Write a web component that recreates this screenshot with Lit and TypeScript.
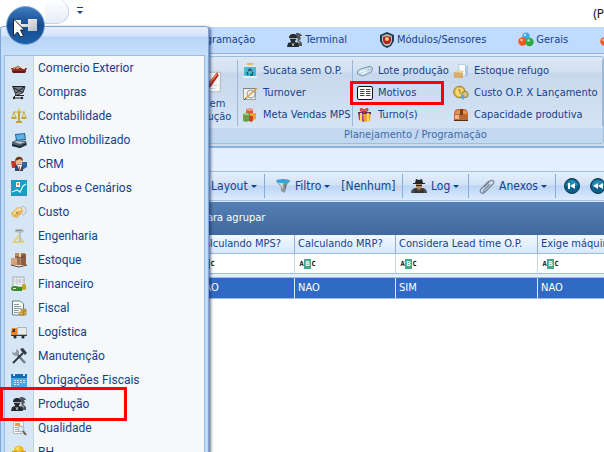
import { LitElement, html, svg, css, nothing } from "lit";
import { customElement } from "lit/decorators.js";
import { classMap } from "lit/directives/class-map.js";

const people = svg`
  <path fill="#50565d" d="M9 1h2l3 1v1h1v1h-2l1 3-2 1 3 3v3h-4l-1-5z"/>
  <path fill="#262a2f" d="M2 6V5l1-2 2-1h3l2 2v2H9v2L8 9v1l3 1 1 4H0l1-4 3-1V9L3 8V6z"/>
  <path stroke="#c3ccd6" stroke-width=".8" d="M2 6.500h8M5 11l1 3 1-3M10 6l1 4 2 1"/>`;

const balls = svg`
  <circle cx="8" cy="4" r="3.6" fill="#39a8e6"/><circle cx="4.5" cy="9.5" r="4.2" fill="#f0571f"/>
  <circle cx="11.5" cy="10" r="4.2" fill="#2fa746"/>
  <circle cx="7" cy="3" r="1.2" fill="#b6e5ff"/><circle cx="3.5" cy="8" r="1.3" fill="#ffc6a6"/>
  <circle cx="10.5" cy="8.5" r="1.3" fill="#b2edb0"/>`;

const icons: Record<string, unknown> = {
  people,
  balls,
  ship: svg`
    <path fill="#8d2f25" d="M0 8h16l-2 5H2z"/><path fill="#5d1a18" d="M1 11h14l-1 2H2z"/>
    <path fill="#c98e63" d="M2 7h2v2H2zM5 7h3v2H5z"/><path fill="#e7e2da" d="M11 5h3v4h-3z"/>
    <path stroke="#9a6c52" d="M4 8l3-2 3 2"/>`,
  cart: svg`
    <path fill="#777c82" d="m2 3 12-1-2 7-7 1z"/>
    <path fill="none" stroke="#222" d="M1 2.500h13l-2 6-7 3h8M2 3l3 8-3 3h10M3 4l8 4M5 9l8-6"/>
    <circle cx="3" cy="14" r="1.200" fill="#222"/><circle cx="11" cy="14" r="1.200" fill="#222"/>`,
  scales: svg`
    <path fill="none" stroke="#c5a532" stroke-width=".8" d="M2 4h12M3 4l-2 6M3 4l2 6M13 4l-2 6M13 4l2 6"/>
    <path fill="#c5a532" d="M7 1h2v12H7zM0 9h6l-1 2H1zM10 9h6l-1 2h-4zM5 13h6v2H5z"/>
    <circle cx="8" cy="2" r="1.5" fill="#e4cb5a"/>`,
  laptop: svg`
    <path fill="#245d8e" d="m4 2 10-1 1 7-10 1z"/><path fill="#56b4e4" d="m5 3 8-1 1 5-8 1z"/>
    <path fill="#51606d" d="m1 10 4-2 10 1 1 4-7 3-8-2z"/><path fill="#b8c5cf" d="m3 10 3-1 8 1-5 2z"/>
    <path fill="#1f2c38" d="m1 12 8 2 6-3v2l-6 3-8-2z"/>`,
  crm: svg`
    <path fill="#c63928" d="M0 5h5v7H1z"/><path fill="#2f63a8" d="M11 6h5v5l-5 3z"/>
    <path fill="#39455e" d="M4 15V9l4-1 4 1v6z"/><path fill="#fff" d="M6 9h5l-2 6z"/>
    <circle cx="8" cy="5" r="3.4" fill="#f0b78c"/><path fill="#6c321b" d="M4 5c0-5 8-6 8 0L9 3z"/>
    <path stroke="#d9422f" d="m8 10 1 4"/>`,
  chart: svg`
    <path fill="#159fc2" d="M0 0h16v16H0z"/><path fill="none" stroke="#e8fbff" stroke-width="1.2" d="m1 12 5-2 3 2 3-6 3-2"/>
    <path fill="#fff" d="M5 2h4v5H5z"/><path fill="#e77b36" d="M6 3h2v2H6z"/>`,
  tag: svg`
    <path fill="none" stroke="#bab9a8" d="M9 6c1-6 7-4 6 2-1 3-3 4-4 2"/>
    <path fill="#e6b65f" d="m0 9 7-6 4 1 1 4-6 6-4-1z"/><path fill="#f6da9a" d="m2 9 5-5 2 1-6 6z"/>
    <circle cx="9" cy="5.500" r="1" fill="#fff"/><path stroke="#a56b25" d="m5 8 2 2"/>`,
  engineer: svg`
    <path fill="#e0d276" fill-rule="evenodd" d="m1 15 6-8 6 6 1 2zM5 13h5L7 10z"/>
    <path fill="#b8c0c5" d="M4 1h8l1 3-3 1v9H8V5L4 4z"/><path fill="#8c959b" d="M5 2h6v1H5z"/>`,
  boxes: svg`
    <path fill="#b98962" d="M4 1h10v12H4z"/><path fill="#8c5f43" d="M10 2h5v11h-5z"/>
    <path fill="#d2a57c" d="M0 6h7v7H0z"/><path fill="#9f7151" d="M6 6h3v7H6z"/>
    <path stroke="#6a432e" d="M4 5h10M0 13l8 2 8-2"/><path fill="#ead0ac" d="M8 1h2v4H8z"/>`,
  finance: svg`
    <path fill="#f3f5f7" stroke="#a0a9b0" d="M2 1h11v10H2z"/><path stroke="#bdc5cc" d="M3 4h9M3 6h9M6 2v7M9 2v7"/>
    <ellipse cx="4" cy="12.500" rx="4" ry="2.500" fill="#398b2c"/><path fill="#e6f4dc" d="M2 12h3v1H2z"/>
    <path fill="#398b2c" d="M6 11h5v4H5z"/><path fill="#d7b63b" d="M11 8h4v6h-4z"/><path stroke="#927721" stroke-width=".6" d="M11 10h4M11 12h4"/>`,
  fiscal: svg`
    <path fill="#fbfdfd" stroke="#617f84" d="M1.500 1h8l3 3v11h-11z"/>
    <path stroke="#87999b" d="M3 4.500h5M3 6.500h7M3 8.500h7M3 10.500h5M3 12.500h4"/>
    <path fill="#e9b94d" stroke="#8c692b" stroke-width=".6" d="M10 9h5v2h-5zM8 12h5v3H8zM12 11h3v4h-3z"/>`,
  truck: svg`
    <path fill="#aeb5bb" d="M6 3h10v8H6z"/><path fill="#e7eaed" d="M7 4h8v6H7z"/>
    <path fill="#ec8426" d="M1 4h5v8H0V8z"/><path fill="#313a42" d="M2 5h2v3H1zM0 11h16v1H0z"/>
    <circle cx="4" cy="13" r="1.600" fill="#252b30"/><circle cx="12" cy="13" r="1.600" fill="#252b30"/>`,
  tools: svg`
    <path stroke="#707a82" stroke-width="2.400" d="m5 5 9 10"/><path stroke="#33383d" stroke-width="2" d="M12 5 2 15"/>
    <path fill="#929ca4" d="M1 3l2 2 2-1V1l3 2v3L5 8 2 7z"/><path fill="#343b42" d="m9 1 3-1 4 5-2 2-3-3z"/>`,
  calendar: svg`
    <path fill="#48a8e7" d="M0 3h16v12H0z"/><path fill="#126cb8" d="M0 2h16v4H0z"/>
    <path fill="#cdeaff" d="M2 0h2v4H2zM12 0h2v4h-2zM3 8h2v1H3zM6 8h2v1H6zM9 8h2v1H9zM12 8h2v1h-2zM3 10h2v1H3zM6 10h2v1H6zM9 10h2v1H9zM12 10h2v1h-2zM3 12h2v1H3zM6 12h2v1H6z"/>`,
  quality: svg`
    <path fill="#fafafa" stroke="#b7bbc0" d="M2.500 1.500h10v12h-10z"/><path fill="#e89348" d="M4 3h5v3H4z"/>
    <path stroke="#a3abb3" d="M4 7.500h7M4 9.500h6M4 11.500h4"/><circle cx="10" cy="9" r="3" fill="#d7e8f2" stroke="#a9b3bb"/>
    <path stroke="#655e5b" stroke-width="2" d="m12 11 3 4"/>`,
  hr: svg`
    <path fill="#f4bc18" d="M3 7c0-7 10-7 10 0z"/><path fill="#ffe36b" d="M6 3h2v3H5z"/>
    <path fill="#d7930c" d="M1 7h14v2H1z"/><circle cx="8" cy="11" r="4" fill="#efbb8a"/>`,
  trash: svg`
    <path fill="#dfb956" d="M5 0h6v3H5z"/><path fill="#dbe6ec" d="M1 2h14v3H1z"/><path fill="#45bdd4" d="M2 4h12v10H2z"/>
    <path fill="#e5eff3" d="M1 13h14v2H1z"/>
    <path fill="none" stroke="#185668" stroke-width="1.500" d="m6 8 2-2 2 2M11 9l-1 3H8M5 9l1 3"/>`,
  turnover: svg`
    <path fill="#f3f0e8" stroke="#9ba2a6" d="M1.500 3.500h12v11h-12z"/><path fill="#78848b" d="M1 3h13v1H1z"/>
    <circle cx="9" cy="9" r="4" fill="#eef5f9" stroke="#969ea4"/><path stroke="#df9b31" stroke-width="1.500" d="m3 14 12-11"/>
    <path stroke="#465158" d="m2 15 2-2"/>`,
  sales: svg`
    <path fill="#d9583d" d="M4 2h7v7H4z"/><ellipse cx="7.500" cy="2.500" rx="3.500" ry="1.500" fill="#f09a80"/>
    <path fill="#6c9e44" d="M1 7h6v7l-3 1-3-1z"/><path fill="#e4a733" d="M8 6h6v6l-3 1-3-1z"/>
    <ellipse cx="4" cy="7" rx="3" ry="1.300" fill="#a5cb80"/><path fill="#c7432e" d="M7 9h4v5l-2 1-2-1z"/>`,
  label: svg`
    <path fill="#c9dff0" stroke="#7895b0" d="m.5 8 3-2 10-3 2 2-1 4-9 4-5-2z"/><circle cx="12.500" cy="5.500" r="1.200" fill="#fff" stroke="#7895b0" stroke-width=".6"/>
    <path stroke="#fff" d="m3 9 6-2M5 11l5-2"/>`,
  list: svg`
    <rect x=".5" y="1.500" width="15" height="13" rx="1.500" fill="#fff" stroke="#111"/>
    <path stroke="#444" d="M3 4.500h4.500M3 6.500h4.500M3 8.500h4.500M3 10.500h4.500M9 4.500h4.500M9 6.500h4.500M9 8.500h4.500M9 10.500h4.500"/>`,
  gift: svg`
    <path fill="#b33d79" d="M1 6h6v9L2 13z"/><path fill="#eaa62d" d="M6 6h8l-1 8-6 1z"/>
    <path fill="#67315d" d="M1 5h13v2H1z"/><path fill="#ffda59" d="M3 6h2v8H3zM10 6h2v8h-2z"/>
    <path fill="none" stroke="#be3c2b" stroke-width="1.500" d="M7 5C1 4 4-1 7 4c4-5 6 0 0 1"/>`,
  folder: svg`
    <path fill="#f7fbff" stroke="#b7cde0" d="M5.500 1.500h6l3 2v9l-8 1z"/><path fill="#a8c8df" d="M12 3h3v9l-3 2z"/>
    <path fill="#d5ad6f" d="M1 9h9v6H1z"/><path fill="#eed4a6" d="m1 9 3-2 7 1-1 2z"/><path fill="#fff" d="M7 2h3v4H7z"/>`,
  coins: svg`
    <circle cx="6.500" cy="7" r="5.800" fill="#e0b43a" stroke="#a77e18"/><circle cx="6.500" cy="7" r="4" fill="#f5dc7b"/>
    <path stroke="#9b7416" d="M5 5h2v4"/><circle cx="12" cy="9.500" r="3.200" fill="#d7c181" stroke="#927d41"/>
    <path fill="#6ba5c4" d="m10 9 2 3-2 3-3-3z"/>`,
  box: svg`
    <path fill="#b96a32" d="M1 8c0-4 2-6 4-6h6c3 0 4 3 4 6v5H1z"/><path fill="#dc9658" d="M2 7c1-3 2-4 4-4h5c2 0 3 2 3 4z"/>
    <path fill="#7d3d1b" d="M7 2h3v6H7z"/><path fill="#efb781" d="M2 8h4v4H2z"/><path fill="#562c19" d="M1 13h14v1H1z"/>`,
  shield: svg`
    <path fill="#203b48" d="m8 0 7 3v6l-3 5-4 2-4-2-3-5V3z"/><path fill="#b5c3c6" d="m8 2 5 2v5l-2 4-3 1-3-1-2-4V4z"/>
    <path fill="#ad2520" d="M4 5l4-1 4 1v4l-2 3H6L4 9z"/><circle cx="8" cy="7" r="2" fill="#ffc35b"/>`,
  funnel: svg`
    <path fill="#8f9699" d="M1 3h14l-5 6v6l-4-2V9z"/><path fill="#d5d9da" d="M3 4h5v8l-1-3z"/>
    <ellipse cx="8" cy="3" rx="7" ry="2" fill="#3ba2d5"/><path fill="#5c6468" d="m10 8 2-3-2 9z"/>`,
  spy: svg`
    <path fill="#4d4a46" d="M0 15c0-4 3-5 5-5h6c3 0 5 2 5 5z"/><path fill="#ba8257" d="M5 5h6v4l-3 3-3-3z"/>
    <path fill="#222628" d="m5 1 3 1 3-1 1 4h2v1H2V5h2zM5 7h6v1H5z"/><path fill="#35332f" d="m4 10 4 4 4-4 1 5H3z"/>`,
  clip: svg`<path fill="none" stroke="#7c8791" stroke-width="1.200" d="m5 9 6-6c3-2 5 1 3 3l-8 8c-3 3-6 0-4-3l8-8m1 3-6 6c-1 2 1 3 2 1l6-6"/>`,
  pen: svg`
    <path fill="#f7f7f7" stroke="#a5afb7" stroke-width=".5" d="M2 2h13v12H2z"/><path stroke="#c2c8ce" stroke-width=".5" d="M3 10h10M3 12h9"/>
    <path fill="#b42b20" d="m13 2 1 2-5 7-2 1V9z"/><path stroke="#e99461" stroke-width=".700" d="m8 9 5-6"/><path fill="#3d3c41" d="m7 10 1 1-3 3z"/>`,
  first: svg`
    <circle cx="8" cy="8" r="7.500" fill="#07618b" stroke="#12384b"/><path fill="#35a9cf" d="M2 8a6 6 0 0 1 12 0z" opacity=".6"/>
    <path fill="#fff" d="M4 5h2v6H4zM11 5v6L6 8z"/>`,
  rewind: svg`
    <circle cx="8" cy="8" r="7.500" fill="#07618b" stroke="#12384b"/><path fill="#35a9cf" d="M2 8a6 6 0 0 1 12 0z" opacity=".6"/>
    <path fill="#fff" d="M8 5v6L3 8zM13 5v6L8 8z"/>`,
};

const icon = (name: string) =>
  html`<svg class="icon" viewBox="0 0 16 16" fill="none" aria-hidden="true">${icons[name]}</svg>`;

const MODULES: [string, string][] = [
  ["Comercio Exterior", "ship"], ["Compras", "cart"], ["Contabilidade", "scales"],
  ["Ativo Imobilizado", "laptop"], ["CRM", "crm"], ["Cubos e Cenários", "chart"],
  ["Custo", "tag"], ["Engenharia", "engineer"], ["Estoque", "boxes"],
  ["Financeiro", "finance"], ["Fiscal", "fiscal"], ["Logística", "truck"],
  ["Manutenção", "tools"], ["Obrigações Fiscais", "calendar"], ["Produção", "people"],
  ["Qualidade", "quality"], ["RH", "hr"],
];

const TABS: [string, string][] = [
  ["Programação", "calendar"], ["Terminal", "people"],
  ["Módulos/Sensores", "shield"], ["Gerais", "balls"], ["", "balls"],
];

const COMMANDS: [string, string][][] = [
  [["Sucata sem O.P.", "trash"], ["Turnover", "turnover"], ["Meta Vendas MPS", "sales"]],
  [["Lote produção", "label"], ["Motivos", "list"], ["Turno(s)", "gift"]],
  [["Estoque refugo", "folder"], ["Custo O.P. X Lançamento", "coins"], ["Capacidade produtiva", "box"]],
];

const COLUMNS = ["", "Calculando MPS?", "Calculando MRP?", "Considera Lead time O.P.", "Exige máquina"];
const ROW = ["", "NAO", "NAO", "SIM", "NAO"];

@customElement("app-menu")
export class AppMenu extends LitElement {
  static styles = css`
    :host {
      display: block;
      box-sizing: border-box;
      border: 1px solid #7fa5d8;
      border-radius: 4px 4px 0 0;
      background: #bfdbfa;
      box-shadow: 2px 1px 3px rgba(20, 40, 80, 0.6);
      padding: 0 3px;
    }
    .head {
      height: 28px;
      margin: 0 -3px;
      border-radius: 3px 3px 0 0;
      background: linear-gradient(#e5f0fd 0, #d3e4fa 9px, #b9d4f6 10px, #c6dffa 100%);
    }
    .list {
      margin: 0;
      padding: 0;
      list-style: none;
      height: calc(100% - 28px);
      border: 1px solid #9bbbe3;
      box-sizing: border-box;
      background: linear-gradient(90deg, #d7e6f5 28px, #c4d4e5 28px, #c4d4e5 29px, #f6f8fa 29px);
    }
    .item {
      position: relative;
      display: flex;
      align-items: center;
      gap: 11px;
      width: 100%;
      height: 24px;
      padding: 0 6px;
      border: 0;
      background: none;
      color: #15428b;
      font: 12px/16px Roboto, "Noto Sans", sans-serif;
      white-space: nowrap;
    }
    .icon { width: 16px; height: 16px; flex: none; }
    .marked::after {
      content: "";
      position: absolute;
      inset: -5px auto -5px -5px;
      width: 127px;
      box-sizing: border-box;
      border: 3px solid #f00;
      z-index: 1;
    }
  `;

  render() {
    return html`
      <div class="head"></div>
      <ul class="list">
        ${MODULES.map(([name, pic]) => html`
          <li><button class=${classMap({ item: true, marked: name === "Produção" })}>${icon(pic)}<span>${name}</span></button></li>`)}
      </ul>`;
  }
}

@customElement("app-root")
export class AppRoot extends LitElement {
  static styles = css`
    :host {
      display: block;
      position: relative;
      min-height: 100vh;
      overflow: hidden;
      background: #fff;
      color: #15428b;
      font: 11px/14px "DejaVu Sans Condensed", "DejaVu Sans", sans-serif;
      white-space: nowrap;
    }
    button {
      display: flex;
      align-items: center;
      padding: 0;
      border: 0;
      background: none;
      color: inherit;
      font: inherit;
      white-space: nowrap;
    }
    .icon { width: 16px; height: 16px; flex: none; }
    .title {
      display: flex;
      align-items: center;
      height: 27px;
      padding-left: 45px;
      color: #111;
      font: 12px/16px "Noto Sans", sans-serif;
    }
    .quick {
      width: 23px;
      height: 24px;
      margin-bottom: 4px;
      border-right: 1px solid #c5d3e6;
      border-bottom: 1px solid #c5d3e6;
      border-radius: 0 16px 16px 0;
      background: linear-gradient(#fff, #e5edf7);
    }
    .more { margin: 0 0 6px 7px; width: 8px; height: 8px; }
    .name { margin: 0 0 0 auto; font: inherit; }
    .tabs {
      display: flex;
      align-items: center;
      gap: 32px;
      height: 26px;
      padding-left: 172px;
      background: #bfdbff;
      border-bottom: 1px solid #8db2e3;
    }
    .tab { gap: 2px; flex: none; }
    .ribbon {
      padding: 2px 0;
      border-bottom: 2px solid #8db2e3;
      background: linear-gradient(#e3ecf7, #cbddef);
    }
    .group {
      border: 1px solid #9ebfdb;
      border-width: 1px 1px 1px 0;
      border-radius: 3px;
      background: linear-gradient(#dde8f4 0, #d2e0f0 15px, #c7d8ed 16px, #d9e8f7 100%);
    }
    .cmds { display: flex; padding: 3px 0 2px 180px; height: 66px; }
    .big {
      flex-direction: column;
      width: 57px;
      padding-top: 9px;
    }
    .big .icon { width: 32px; height: 26px; }
    .big span { display: block; line-height: 13px; margin-top: 2px; }
    .col {
      display: grid;
      grid-auto-rows: 22px;
      flex: none;
      border-left: 1px solid #9cb8d8;
      padding-left: 4px;
    }
    .cmd { position: relative; gap: 5px; }
    .c0 { width: 110px; }
    .c1 { width: 92px; }
    .c2 { width: 149px; border-left: 0; border-right: 1px solid #9cb8d8; }
    .marked::after {
      content: "";
      position: absolute;
      inset: -1px 5px -1px -7px;
      border: 3px solid #f00;
    }
    .caption {
      padding-left: 228px;
      height: 15px;
      text-align: center;
      color: #3e6aaa;
      background: #c2d8f0;
    }
    .strip { height: 23px; background: #e3efff; }
    .bar {
      display: flex;
      align-items: center;
      height: 28px;
      padding-left: 190px;
      border-top: 1px solid #a3bfe2;
      border-bottom: 1px solid #a3bfe2;
      background: linear-gradient(#e5effb 0, #d2e2f6 13px, #bcd5f5 14px, #dcebff 100%);
      font-size: 12px;
    }
    .tool {
      flex: none;
      box-sizing: border-box;
      height: 24px;
      gap: 3px;
      border-right: 1px solid #8aabd6;
    }
    .tool .icon { margin-right: 1px; }
    .caret {
      width: 0;
      border: 3px solid transparent;
      border-top-color: #15428b;
      border-bottom: 0;
    }
    .layout { width: 75px; padding-left: 21px; }
    .filter { width: 138px; padding-left: 10px; }
    .filter .value { margin-left: 8px; }
    .log { width: 66px; padding-left: 8px; }
    .files { width: 87px; padding-left: 10px; }
    .nav { gap: 10px; display: flex; padding-left: 8px; }
    .panel {
      padding: 9px 0 10px 76px;
      color: #fff;
      background: linear-gradient(#557eb2, #41699f);
      border-top: 1px solid #d6e5f6;
    }
    .grid {
      width: 100%;
      table-layout: fixed;
      border-collapse: separate;
      border-spacing: 0;
    }
    .k0 { width: 193px; }
    .k1, .k2 { width: 101px; }
    .k3 { width: 142px; }
    th, td {
      padding: 0 0 0 3px;
      overflow: hidden;
      text-align: left;
      font-weight: normal;
      border-left: 1px solid #c6d8ef;
    }
    th {
      height: 18px;
      background: linear-gradient(#f2f8ff, #d8e9fd);
      border-bottom: 1px solid #9ebde3;
      border-left-color: #8fb0dc;
    }
    .find td { height: 19px; border-bottom: 1px solid #9ebde3; }
    .find label { display: flex; align-items: center; }
    .abc {
      display: flex;
      flex: none;
      margin-left: 1px;
      color: #111;
      font: bold 7px/10px "DejaVu Sans Mono", monospace;
    }
    .abc span { width: 5px; text-align: center; }
    .abc .mid { width: 7px; color: #fff; background: #43a987; }
    .find input { min-width: 0; width: 60px; height: 14px; padding: 0; border: 0; background: none; font: inherit; }
    .gap td { height: 3px; border-left: 0; background: #e3efff; border-bottom: 1px solid #9ebde3; }
    .sel td { height: 20px; background: #316ac5; color: #fff; border-left-color: #dce8f8; border-bottom: 1px solid #9ebde3; }
    .menu {
      position: absolute;
      top: 26px;
      bottom: -8px;
      left: 0;
      width: 209px;
    }
    .orb {
      position: absolute;
      top: 5px;
      left: 5px;
      width: 40px;
      height: 40px;
    }
    .orb svg { width: 40px; height: 40px; }
  `;

  render() {
    return html`
      <header class="title">
        <div class="quick"></div>
        <button class="more" aria-label="Personalizar">
          <svg width="8" height="8"><path fill="#15428b" d="M1 0h6v1H1zM1 4h6L4 7z"/></svg>
        </button>
        <h1 class="name">(P</h1>
      </header>
      <nav class="tabs">${TABS.map(([t, i]) => html`<button class="tab">${icon(i)}<span>${t}</span></button>`)}</nav>
      <section class="ribbon">
        <div class="group">
          <div class="cmds">
            <button class="big">${icon("pen")}<span>Ordem<br>Produção</span></button>
            ${COMMANDS.map((col, n) => html`
              <div class="col c${n}">
                ${col.map(([t, i]) => html`<button class=${classMap({ cmd: true, marked: t === "Motivos" })}>${icon(i)}<span>${t}</span></button>`)}
              </div>`)}
          </div>
          <div class="caption">Planejamento / Programação</div>
        </div>
      </section>
      <div class="strip"></div>
      <div class="bar">
        <button class="tool layout"><span>Layout</span><i class="caret"></i></button>
        <button class="tool filter">${icon("funnel")}<span>Filtro</span><i class="caret"></i><span class="value">[Nenhum]</span></button>
        <button class="tool log">${icon("spy")}<span>Log</span><i class="caret"></i></button>
        <button class="tool files">${icon("clip")}<span>Anexos</span><i class="caret"></i></button>
        <div class="nav">
          <button aria-label="Primeiro">${icon("first")}</button>
          <button aria-label="Anterior">${icon("rewind")}</button>
        </div>
      </div>
      <div class="panel">Arraste uma coluna aqui para agrupar</div>
      <table class="grid">
        <colgroup>${COLUMNS.map((_, n) => html`<col class="k${n}">`)}</colgroup>
        <thead>
          <tr>${COLUMNS.map((c) => html`<th>${c}</th>`)}</tr>
        </thead>
        <tbody>
          <tr class="find">${COLUMNS.map((c) => html`<td>${c ? html`
            <label><span class="abc"><span>A</span><span class="mid">B</span><span>C</span></span><input type="text" aria-label=${c}></label>` : nothing}</td>`)}</tr>
          <tr class="gap"><td colspan="5"></td></tr>
          <tr class="sel">${ROW.map((v) => html`<td>${v}</td>`)}</tr>
        </tbody>
      </table>
      <app-menu class="menu"></app-menu>
      <button class="orb" aria-label="Menu principal">
        <svg viewBox="0 0 40 40">
          <defs>
            <linearGradient id="ball" x1="0" y1="0" x2="0" y2="1"><stop stop-color="#3f7cc0"/><stop offset=".5" stop-color="#144a90"/><stop offset="1" stop-color="#1d62a8"/></linearGradient>
            <linearGradient id="bar" x1="0" y1="0" x2="1" y2="1"><stop stop-color="#fff"/><stop offset="1" stop-color="#b9bcc2"/></linearGradient>
          </defs>
          <circle cx="20.500" cy="20.500" r="19" fill="url(#ball)" stroke="#7fa9d6"/>
          <path fill="url(#bar)" d="M9 15h7v4h7v-5h9v12h-9v-4h-7v4H9z"/>
          <path fill="#fff" stroke="#222" d="M8.500 14v17l4-4 3 5 3-1-3-6h4z"/>
        </svg>
      </button>`;
  }
}
